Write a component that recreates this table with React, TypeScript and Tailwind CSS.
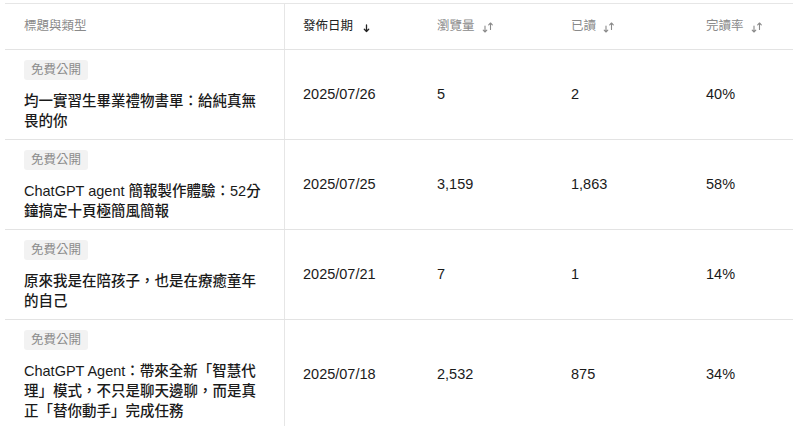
const font = { fontFamily: '"Liberation Sans", "Noto Sans CJK TC", sans-serif' }

type Post = {
  title: string
  date: string
  views: string
  reads: string
  rate: string
}

const posts: Post[] = [
  { title: "均一實習生畢業禮物書單：給純真無畏的你", date: "2025/07/26", views: "5", reads: "2", rate: "40%" },
  { title: "ChatGPT agent 簡報製作體驗：52分鐘搞定十頁極簡風簡報", date: "2025/07/25", views: "3,159", reads: "1,863", rate: "58%" },
  { title: "原來我是在陪孩子，也是在療癒童年的自己", date: "2025/07/21", views: "7", reads: "1", rate: "14%" },
  {
    title: "ChatGPT Agent：帶來全新「智慧代理」模式，不只是聊天邊聊，而是真正「替你動手」完成任務",
    date: "2025/07/18",
    views: "2,532",
    reads: "875",
    rate: "34%",
  },
]

function SortBoth() {
  return (
    <svg width="12" height="11" viewBox="0 0 12 11" fill="none" stroke="#8a8a8a" strokeWidth="1.1" strokeLinecap="round" strokeLinejoin="round" className="ml-[7px] mt-[1px]">
      <path d="M3 4v6M1.2 8.2l1.8 1.8 1.8-1.8" />
      <path d="M8.5 7.5v-6.5M6.7 2.8l1.8-1.8 1.8 1.8" />
    </svg>
  )
}

function SortDown() {
  return (
    <svg width="9" height="10" viewBox="0 0 9 10" fill="none" stroke="#222" strokeWidth="1.3" strokeLinecap="round" strokeLinejoin="round" className="ml-[9px] mt-[2px]">
      <path d="M4.5 2v6.5M2.3 6.3l2.2 2.2 2.2-2.2" />
    </svg>
  )
}

const cols = "grid grid-cols-[280px_134px_134px_134px_1fr]"

export default function App() {
  return (
    <div className="min-h-screen bg-white pt-[3px] pl-[5px]" style={font}>
      <div className="w-[788px] border-t border-[#e6e6e6]">
        {/* Header */}
        <div className={`${cols} h-[46px] border-b border-[#e3e3e3] text-[12.5px] text-[#8a8a8a]`}>
          <div className="flex items-center border-r border-[#e6e6e6] pl-[19px]">標題與類型</div>
          <div className="flex items-center pl-[18px] text-[#222]">
            發佈日期
            <SortDown />
          </div>
          <div className="flex items-center pl-[18px]">
            瀏覽量
            <SortBoth />
          </div>
          <div className="flex items-center pl-[18px]">
            已讀
            <SortBoth />
          </div>
          <div className="flex items-center pl-[19px]">
            完讀率
            <SortBoth />
          </div>
        </div>

        {/* Rows */}
        {posts.map((p) => (
          <div key={p.date} className={`${cols} border-b border-[#e3e3e3] text-[14.5px] text-[#1a1a1a]`}>
            <div className="border-r border-[#e6e6e6] pt-[10px] pb-[8px] pl-[19px] pr-[19px]">
              <div className="flex h-[20px] w-fit items-center rounded-[3px] bg-[#f2f2f2] px-[7px] text-[12.5px] leading-[20px] text-[#8c8c8c]">
                免費公開
              </div>
              <p className="mt-[11px] font-medium leading-[20px]">{p.title}</p>
            </div>
            <div className="flex items-center pl-[18px]">{p.date}</div>
            <div className="flex items-center pl-[18px]">{p.views}</div>
            <div className="flex items-center pl-[18px]">{p.reads}</div>
            <div className="flex items-center pl-[19px]">{p.rate}</div>
          </div>
        ))}
      </div>
    </div>
  )
}
